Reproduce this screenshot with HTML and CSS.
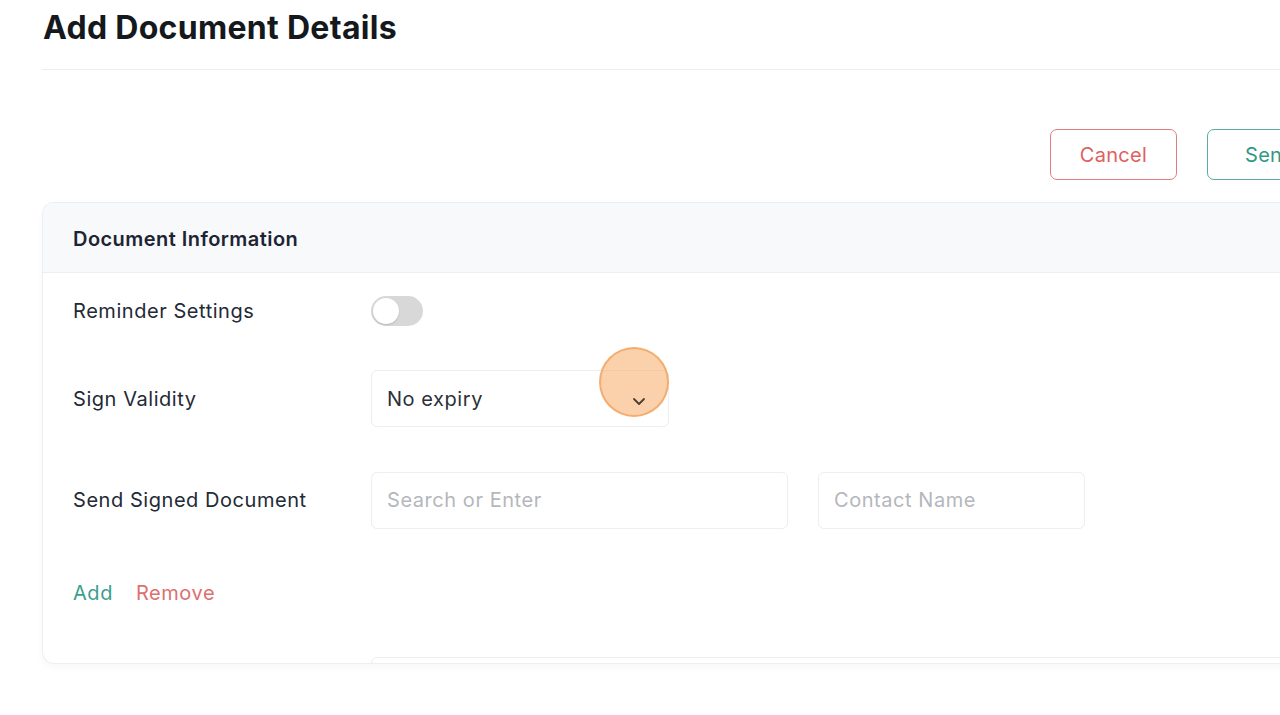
FILE: index.html
```html
<!DOCTYPE html>
<html>
<head>
<meta charset="utf-8">
<link rel="stylesheet" href="styles.css">
</head>
<body>
<div class="page">
  <header class="title-bar">
    <h1 class="title">Add Document Details</h1>
  </header>
  <div class="actions">
    <button class="btn btn-cancel">Cancel</button>
    <button class="btn btn-send">Send</button>
  </div>
  <section class="card">
    <div class="card-head">Document Information</div>
    <div class="card-body">
      <div class="row row-toggle">
        <div class="label">Reminder Settings</div>
        <div class="toggle"><span class="knob"></span></div>
      </div>
      <div class="row row-select">
        <div class="label">Sign Validity</div>
        <div class="select">
          <span>No expiry</span>
          <svg class="chev" width="14" height="9" viewBox="0 0 14 9"><path d="M2 2 L7 7 L12 2" fill="none" stroke="#4a3f38" stroke-width="1.8" stroke-linecap="round" stroke-linejoin="round"/></svg>
          <span class="click-dot"></span>
        </div>
      </div>
      <div class="row row-inputs">
        <div class="label">Send Signed Document</div>
        <div class="inputs">
          <div class="input input-wide">Search or Enter</div>
          <div class="input input-narrow">Contact Name</div>
        </div>
      </div>
      <div class="links">
        <span class="link-add">Add</span>
        <span class="link-remove">Remove</span>
      </div>
      <div class="row row-next">
        <div class="label"></div>
        <div class="input input-full"></div>
      </div>
    </div>
  </section>
</div>
</body>
</html>
```
FILE: styles.css
```css
* { box-sizing: border-box; }
html, body { margin: 0; padding: 0; background: #fff; overflow: hidden; }
body { font-family: Inter, "Noto Sans", sans-serif; color: #1f2430; width: 1280px; height: 715px; letter-spacing: 0.55px; }
.page { width: 1334px; padding-left: 42px; }
.title-bar { border-bottom: 1px solid #ececec; height: 70px; }
.title { margin: 0; padding-top: 8px; padding-left: 1px; font-size: 32px; font-weight: 700; color: #15181d; letter-spacing: 0.3px; line-height: 40px; }
.actions { display: flex; justify-content: flex-end; gap: 30px; padding-top: 59px; height: 132px; }
.btn { height: 51px; border-radius: 7px; background: #fff; font-family: Inter, sans-serif; font-size: 20px; letter-spacing: 0.3px; padding: 0; }
.btn-cancel { width: 127px; border: 1px solid #e27c7c; color: #e0605f; }
.btn-send { width: 127px; border: 1px solid #58ad9e; color: #2f9983; text-align: left; padding-left: 37px; }
.card { border: 1px solid #eceef1; border-radius: 12px 0 0 12px; border-right: none; height: 462px; overflow: hidden; box-shadow: 0 4px 10px rgba(0,0,0,0.03); }
.card-head { background: #f8f9fb; height: 70px; border-bottom: 1px solid #eceef1; padding-left: 30px; display: flex; align-items: center; font-size: 20px; font-weight: 600; color: #1d2433; padding-top: 2px; letter-spacing: 0.45px; }
.card-body { padding-left: 30px; }
.row { display: flex; align-items: center; }
.label { width: 298px; flex-shrink: 0; font-size: 20px; color: #232a36; }
.row-toggle { height: 75px; }
.toggle { width: 52px; height: 30px; border-radius: 15px; background: #d8d8d8; position: relative; }
.knob { position: absolute; left: 2px; top: 2px; width: 26px; height: 26px; border-radius: 50%; background: #fff; box-shadow: 0 1px 2px rgba(0,0,0,0.15); }
.row-select { height: 101px; }
.select { width: 298px; height: 57px; border: 1px solid #eceef0; border-radius: 6px; display: flex; align-items: center; justify-content: space-between; padding: 0 22px 0 15px; font-size: 20px; color: #2b303a; position: relative; }
.chev { margin-top: 6px; position: relative; z-index: 2; }
.click-dot { position: absolute; z-index: 1; left: 227px; top: -24px; width: 70px; height: 70px; border-radius: 50%; background: rgba(249, 178, 115, 0.6); border: 2px solid rgba(240, 160, 90, 0.75); }
.row-inputs { height: 102px; }
.inputs { display: flex; gap: 30px; }
.input { height: 57px; border: 1px solid #eceef0; border-radius: 6px; display: flex; align-items: center; padding-left: 15px; font-size: 20px; color: #b4b7bc; }
.input-wide { width: 417px; }
.input-narrow { width: 267px; }
.links { display: flex; gap: 23px; font-size: 20px; height: 82px; align-items: center; padding-top: 2px; }
.link-add { color: #3b9f8b; }
.link-remove { color: #de6f6f; }
.row-next { height: 80px; align-items: flex-start; padding-top: 24px; }
.input-full { width: 1000px; flex-shrink: 0; }
```
